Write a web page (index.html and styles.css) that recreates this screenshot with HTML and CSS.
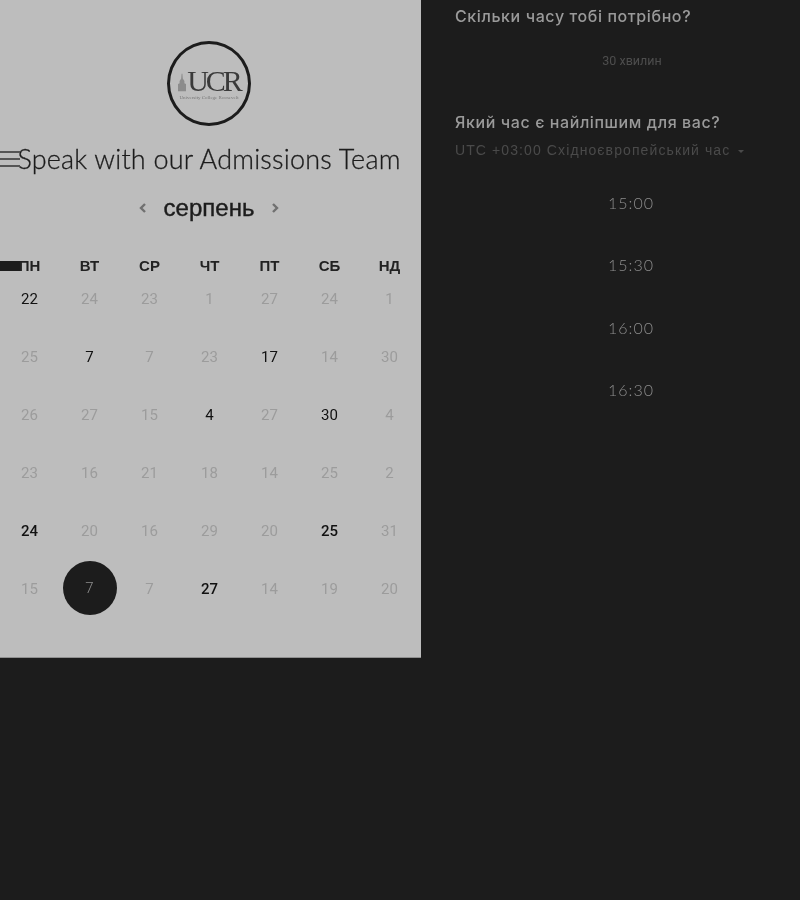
FILE: index.html
```html
<!DOCTYPE html>
<html lang="uk">
<head>
  <meta charset="UTF-8" />
  <meta name="viewport" content="width=device-width, initial-scale=1.0" />
  <title>Speak with our Admissions Team</title>
  <link rel="stylesheet" href="styles.css">
</head>
<body>
  <div class="page">
    <section class="panel">
      <div class="logo">
        <div class="logo-row">
          <svg class="tower" viewBox="0 0 10 22" width="8" height="21" aria-hidden="true">
            <path d="M4.5 0 L5.5 0 L6 6 L8 9 L8 12 L10 13 L10 22 L0 22 L0 13 L2 12 L2 9 L4 6 Z" fill="#8c8c8c"/>
          </svg>
          <span class="logo-name">UCR</span>
        </div>
        <span class="logo-sub">University College Roosevelt</span>
      </div>

      <h1 class="title">Speak with our Admissions Team</h1>
      <div class="burger"><span></span><span></span><span></span></div>

      <div class="month">
        <svg width="10" height="12" viewBox="0 0 10 12" aria-hidden="true"><path d="M7 2 L3 6 L7 10" class="chev"/></svg>
        <span class="month-name">серпень</span>
        <svg width="10" height="12" viewBox="0 0 10 12" aria-hidden="true"><path d="M3 2 L7 6 L3 10" class="chev"/></svg>
      </div>

      <div class="weekdays">
        <span>ПН</span><span>ВТ</span><span>СР</span><span>ЧТ</span><span>ПТ</span><span>СБ</span><span>НД</span>
      </div>
      <div class="week-mark"></div>

      <div class="days">
        <span class="on">22</span><span>24</span><span>23</span><span>1</span><span>27</span><span>24</span><span>1</span>
        <span>25</span><span class="on">7</span><span>7</span><span>23</span><span class="on">17</span><span>14</span><span>30</span>
        <span>26</span><span>27</span><span>15</span><span class="on">4</span><span>27</span><span class="on">30</span><span>4</span>
        <span>23</span><span>16</span><span>21</span><span>18</span><span>14</span><span>25</span><span>2</span>
        <span class="on strong">24</span><span>20</span><span>16</span><span>29</span><span>20</span><span class="on strong">25</span><span>31</span>
        <span>15</span><span class="picked"><b>7</b></span><span>7</span><span class="on strong">27</span><span>14</span><span>19</span><span>20</span>
      </div>
    </section>

    <section class="side">
      <h2 class="question">Скільки часу тобі потрібно?</h2>
      <div class="duration">30 хвилин</div>

      <h2 class="question question-time">Який час є найліпшим для вас?</h2>
      <div class="zone">UTC +03:00 Східноєвропейський час <i class="caret"></i></div>

      <ul class="slots">
        <li>15:00</li>
        <li>15:30</li>
        <li>16:00</li>
        <li>16:30</li>
      </ul>
    </section>
  </div>
</body>
</html>
```

FILE: styles.css
```css
html, body {
  margin: 0;
  height: 100%;
  background-color: #1c1c1c;
}
.page {
  display: flex;
  height: 900px;
  overflow: hidden;
  font-family: 'Inter', sans-serif;
  filter: grayscale(1);
}
.panel {
  position: relative;
  flex: none;
  box-sizing: border-box;
  width: 421px;
  height: 658px;
  padding-top: 41px;
  background-color: #bdbdbd;
  border-bottom: 1px solid #8f8f8f;
  color: #1c1c1c;
}
.logo {
  box-sizing: border-box;
  width: 84px;
  height: 85px;
  margin-left: 167px;
  border: 3px solid #1c1c1c;
  border-radius: 50%;
  display: flex;
  flex-direction: column;
  align-items: center;
  justify-content: center;
}
.logo-row {
  display: flex;
  align-items: flex-end;
  gap: 1px;
  height: 24px;
  margin-top: 3px;
}
.logo-name {
  font-family: 'Liberation Serif', serif;
  font-size: 30px;
  line-height: 24px;
  letter-spacing: -3px;
  color: #3a3a3a;
}
.logo-sub {
  margin-top: 2px;
  font-family: 'Liberation Serif', serif;
  font-size: 5px;
  line-height: 6px;
  white-space: nowrap;
  color: #777;
}
.title {
  margin: 16px 0 0;
  width: 418px;
  text-align: center;
  font-family: 'Lato', sans-serif;
  font-size: 27px;
  line-height: 34px;
  font-weight: 300;
  letter-spacing: 0.2px;
  -webkit-text-stroke: 0.3px #1c1c1c;
  color: #1c1c1c;
  white-space: nowrap;
}
.burger {
  position: absolute;
  left: 0;
  top: 151px;
  width: 20px;
  display: flex;
  flex-direction: column;
  gap: 5px;
}
.burger span {
  height: 2px;
  background-color: #555;
}
.month {
  display: flex;
  justify-content: center;
  align-items: center;
  gap: 16px;
  width: 418px;
  height: 30px;
  margin-top: 17px;
}
.month-name {
  font-family: 'Liberation Sans', sans-serif;
  font-size: 24px;
  -webkit-text-stroke: 0.4px #1c1c1c;
}
.chev {
  fill: none;
  stroke: #707070;
  stroke-width: 2.4;
}
.weekdays, .days {
  display: grid;
  grid-template-columns: repeat(7, 60px);
  justify-items: center;
  align-items: center;
}
.weekdays {
  height: 20px;
  margin-top: 32px;
  margin-left: -0.5px;
  font-family: 'Liberation Sans', sans-serif;
  font-size: 15px;
  font-weight: 700;
  color: #222;
}
.week-mark {
  position: absolute;
  left: 0;
  top: 261px;
  width: 20px;
  height: 10px;
  background-color: #1c1c1c;
}
.days {
  grid-auto-rows: 58px;
  margin-top: -5px;
  margin-left: -0.5px;
  font-family: 'Roboto', sans-serif;
  font-size: 15px;
  color: #9c9c9c;
}
.days .on {
  color: #111;
}
.days .strong {
  font-weight: 500;
}
.days .picked {
  width: 54px;
  height: 54px;
  margin-top: -2px;
  display: flex;
  align-items: center;
  justify-content: center;
  border-radius: 50%;
  background-color: #1c1c1c;
  color: #8d8d8d;
}
.days .picked b {
  font-weight: 300;
}
.side {
  flex: none;
  width: 345px;
  padding: 6px 0 0 34px;
}
.question {
  margin: 0;
  font-size: 16px;
  line-height: 20px;
  font-weight: 500;
  letter-spacing: 0.6px;
  color: #9a9a9a;
}
.duration {
  width: 354px;
  margin-top: 27px;
  text-align: center;
  font-family: 'Roboto', sans-serif;
  font-size: 12.5px;
  line-height: 16px;
  color: #4d4d4d;
}
.question-time {
  margin-top: 43px;
}
.zone {
  margin-top: 8px;
  font-family: 'Liberation Sans', sans-serif;
  font-size: 14px;
  line-height: 20px;
  letter-spacing: 1.1px;
  color: #4a4a4a;
  display: flex;
  align-items: center;
  gap: 8px;
  white-space: nowrap;
}
.caret {
  width: 0;
  height: 0;
  margin-top: 2px;
  border-left: 3px solid transparent;
  border-right: 3px solid transparent;
  border-top: 3px solid #4a4a4a;
}
.slots {
  list-style: none;
  margin: 11.5px 0 0;
  padding: 0;
  width: 352px;
}
.slots li {
  height: 62.5px;
  line-height: 62.5px;
  text-align: center;
  font-family: 'Lato', sans-serif;
  font-size: 16px;
  font-weight: 300;
  letter-spacing: 1px;
  color: #8c8c8c;
}
```
